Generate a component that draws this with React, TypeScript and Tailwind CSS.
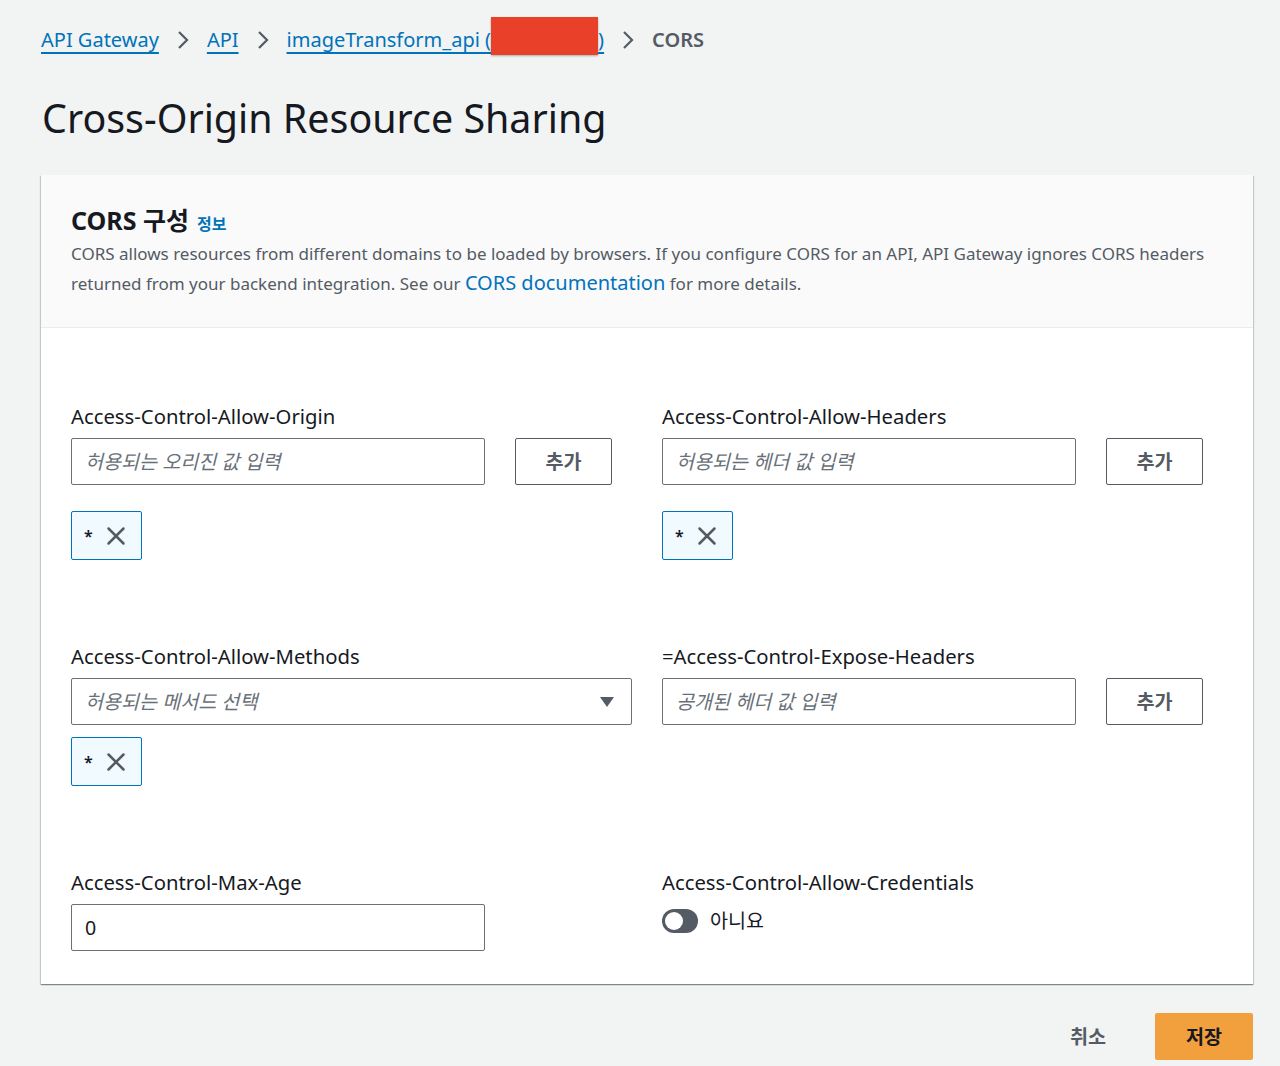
import { X } from "lucide-react";

const FONT = "font-['Noto_Sans','Noto_Sans_CJK_KR',sans-serif]";

function Chevron() {
  return (
    <svg width="14" height="22" viewBox="0 0 14 22" className="mx-[17px] shrink-0">
      <path d="M3 3 L11 11 L3 19" fill="none" stroke="#545b64" strokeWidth="2.2" />
    </svg>
  );
}

function Label({ children }: { children: React.ReactNode }) {
  return <div className="h-6 text-[20.3px] leading-6 text-[#16191f]">{children}</div>;
}

function TextInput({ placeholder, value }: { placeholder?: string; value?: string }) {
  return (
    <div className="flex h-[47px] w-[414px] items-center rounded-[2px] border border-[#687078] bg-white px-[13px] text-[19.6px]">
      {value ? (
        <span className="text-[#16191f]">{value}</span>
      ) : (
        <span className="italic text-[#687078]">{placeholder}</span>
      )}
    </div>
  );
}

function AddButton() {
  return (
    <button className="h-[47px] w-[97px] rounded-[2px] border border-[#545b64] bg-white text-[19.6px] font-bold text-[#545b64]">
      추가
    </button>
  );
}

function Token() {
  return (
    <div className="flex h-[49px] w-[71px] items-center gap-[8px] rounded-[2px] border border-[#0073bb] bg-[#f1faff] pl-[12px]">
      <span className="text-[16px] font-semibold text-[#16191f]">*</span>
      <X size={30} strokeWidth={2} color="#545b64" />
    </div>
  );
}

export default function App() {
  return (
    <div className={`min-h-[1066px] w-[1280px] bg-[#f2f3f3] ${FONT}`}>
      {/* Breadcrumb */}
      <div className="flex h-[80px] items-center pl-[41px] text-[20px]">
        <a className="text-[#0073bb] underline underline-offset-[5px]">API Gateway</a>
        <Chevron />
        <a className="text-[#0073bb] underline underline-offset-[5px]">API</a>
        <Chevron />
        <a className="relative text-[#0073bb] underline underline-offset-[5px]">
          imageTransform_api (<span className="inline-block w-[107px]" />)
          <span className="absolute left-[204px] top-[-8px] h-[38px] w-[107px] bg-[#e9402a] shadow-[0_1px_2px_rgba(0,0,0,0.3)]" />
        </a>
        <Chevron />
        <span className="font-semibold text-[#545b64]">CORS</span>
      </div>

      {/* Title */}
      <h1 className="pl-[42px] pt-[10px] text-[39.4px] leading-[56px] text-[#16191f]">
        Cross-Origin Resource Sharing
      </h1>

      {/* Card */}
      <div className="mx-[41px] mt-[29px] w-[1212px] bg-white shadow-[0_1px_1px_0_rgba(0,28,36,0.3),1px_1px_1px_0_rgba(0,28,36,0.15),-1px_1px_1px_0_rgba(0,28,36,0.15)]">
        <div className="h-[153px] border-b border-[#eaeded] bg-[#fafafa] px-[30px] pt-[28px]">
          <div className="flex items-baseline gap-[8px]">
            <span className="text-[25px] font-bold leading-[34px] text-[#16191f]">CORS 구성</span>
            <span className="text-[16px] font-semibold text-[#0073bb]">정보</span>
          </div>
          <p className="mt-[2px] text-[17px] leading-[29px] text-[#545b64]">
            CORS allows resources from different domains to be loaded by browsers. If you configure CORS for an API, API Gateway ignores CORS headers
            <br />
            returned from your backend integration. See our{" "}
            <a className="text-[20px] text-[#0073bb]">CORS documentation</a> for more details.
          </p>
        </div>

        <div className="px-[30px] pb-[33px] pt-[76px]">
          {/* Row 1 */}
          <div className="grid grid-cols-2 gap-x-[30px]">
            <div>
              <Label>Access-Control-Allow-Origin</Label>
              <div className="mt-[10px] flex gap-[30px]">
                <TextInput placeholder="허용되는 오리진 값 입력" />
                <AddButton />
              </div>
              <div className="mt-[26px]">
                <Token />
              </div>
            </div>
            <div>
              <Label>Access-Control-Allow-Headers</Label>
              <div className="mt-[10px] flex gap-[30px]">
                <TextInput placeholder="허용되는 헤더 값 입력" />
                <AddButton />
              </div>
              <div className="mt-[26px]">
                <Token />
              </div>
            </div>
          </div>

          {/* Row 2 */}
          <div className="mt-[84px] grid grid-cols-2 gap-x-[30px]">
            <div>
              <Label>Access-Control-Allow-Methods</Label>
              <div className="mt-[10px] flex h-[47px] w-[561px] items-center justify-between rounded-[2px] border border-[#687078] bg-white pl-[13px] pr-[16px] text-[19.6px]">
                <span className="italic text-[#687078]">허용되는 메서드 선택</span>
                <svg width="16" height="12" viewBox="0 0 16 12">
                  <path d="M1 1 H15 L8 11 Z" fill="#545b64" />
                </svg>
              </div>
              <div className="mt-[12px]">
                <Token />
              </div>
            </div>
            <div>
              <Label>=Access-Control-Expose-Headers</Label>
              <div className="mt-[10px] flex gap-[30px]">
                <TextInput placeholder="공개된 헤더 값 입력" />
                <AddButton />
              </div>
            </div>
          </div>

          {/* Row 3 */}
          <div className="mt-[84px] grid grid-cols-2 gap-x-[30px]">
            <div>
              <Label>Access-Control-Max-Age</Label>
              <div className="mt-[10px]">
                <TextInput value="0" />
              </div>
            </div>
            <div>
              <Label>Access-Control-Allow-Credentials</Label>
              <div className="mt-[12px] flex items-center gap-[12px]">
                <div className="flex h-[24px] w-[36px] items-center rounded-full bg-[#545b64] pl-[3px]">
                  <div className="h-[18px] w-[18px] rounded-full bg-white" />
                </div>
                <span className="text-[19.6px] text-[#16191f]">아니요</span>
              </div>
            </div>
          </div>
        </div>
      </div>

      {/* Footer */}
      <div className="mr-[27px] mt-[29px] flex items-center justify-end gap-[49px]">
        <button className="text-[19.6px] font-bold text-[#545b64]">취소</button>
        <button className="h-[47px] w-[98px] rounded-[2px] bg-[#f2a03d] text-[19.6px] font-bold text-[#16191f]">
          저장
        </button>
      </div>
    </div>
  );
}
